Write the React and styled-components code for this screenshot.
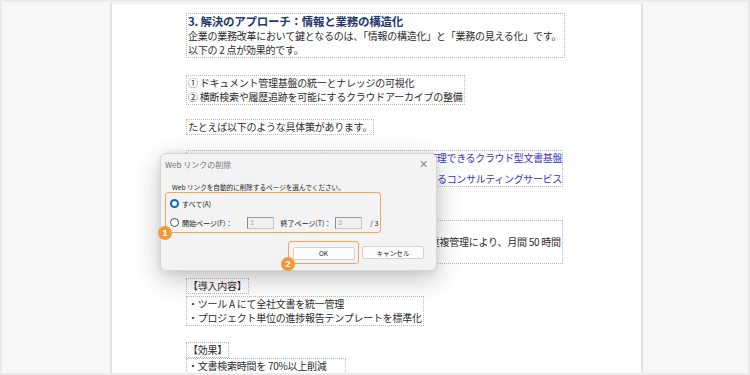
import React from 'react';
import styled, { createGlobalStyle } from 'styled-components';

const GlobalStyle = createGlobalStyle`
  html, body {
    margin: 0;
    padding: 0;
    background: #f7f7f7;
  }
  body {
    width: 750px;
    height: 375px;
    overflow: hidden;
    font-family: "Noto Sans CJK JP", "Noto Sans", sans-serif;
  }
`;

const Frame = styled.div`
  position: relative;
  width: 750px;
  height: 375px;
  box-sizing: border-box;
  border: 2px solid #ebebeb;
  background: #f7f7f7;
  padding: 1px 0 0 108px;
  display: flex;
  overflow: hidden;
`;

const Page = styled.div`
  width: 533px;
  box-sizing: border-box;
  background: #fff;
  border-left: 2px solid #e3e3e3;
  border-right: 2px solid #e3e3e3;
  border-top: 1px solid #eeeeee;
  padding: 9px 0 0 74px;
  display: flex;
  flex-direction: column;
  align-items: flex-start;
  overflow: hidden;
`;

const Box = styled.div`
  margin-top: ${p => p.mt || 0}px;
  width: ${p => (p.w ? `${p.w}px` : 'auto')};
  box-sizing: border-box;
  border: 1px dotted #b9b9b9;
  padding: 0 1px;
  font-size: 10px;
  line-height: 14px;
  letter-spacing: -0.25px;
  color: #2c2c2c;
  white-space: nowrap;
`;

const Heading = styled.div`
  font-size: 11.5px;
  line-height: 15px;
  font-weight: 700;
  color: #1f3a6e;
`;

const Line = styled.div`
  margin-bottom: ${p => p.mb || 0}px;
`;

const LinkLine = styled(Line)`
  color: #3737c8;
  letter-spacing: -0.35px;
`;

/* dialog */

const Dialog = styled.div`
  position: absolute;
  left: 158px;
  top: 151px;
  width: 277px;
  height: 118px;
  box-sizing: border-box;
  background: #f3f3f3;
  border: 1px solid #d6d6d6;
  border-radius: 6px;
  box-shadow: 0 8px 26px rgba(0, 0, 0, 0.24), 0 0 6px rgba(0, 0, 0, 0.08);
  display: flex;
  flex-direction: column;
  font-family: "Noto Sans CJK JP", "Noto Sans", sans-serif;
`;

const TitleBar = styled.div`
  height: 20px;
  display: flex;
  align-items: center;
  justify-content: space-between;
  padding: 0 8px 0 4px;
`;

const Title = styled.span`
  font-size: 8px;
  color: #747474;
`;

const Close = styled.span`
  font-size: 11px;
  color: #8a8a8a;
  font-family: "DejaVu Sans", sans-serif;
  font-weight: 300;
`;

const Instruction = styled.div`
  margin: 9px 0 0 11px;
  font-size: 6.6px;
  line-height: 9px;
  color: #1e1e1e;
`;

const Highlight = styled.div`
  position: relative;
  box-sizing: border-box;
  border: 1.5px solid #f4a660;
  border-radius: 3px;
`;

const Group = styled(Highlight)`
  margin-left: 4px;
  width: 216px;
  height: 41px;
  padding: 1px 0 0 4px;
  display: flex;
  flex-direction: column;
`;

const Row = styled.div`
  height: 19px;
  display: flex;
  align-items: center;
  font-size: 7px;
  color: #1e1e1e;
`;

const Radio = styled.span`
  width: 9px;
  height: 9px;
  box-sizing: border-box;
  border-radius: 50%;
  margin-right: 3px;
  flex-shrink: 0;
  background: #fff;
  border: ${p => (p.checked ? '2.6px solid #0a62c4' : '1px solid #4a4a4a')};
`;

const Label = styled.span`
  margin-right: ${p => p.mr || 0}px;
`;

const Field = styled.span`
  width: 27px;
  height: 12px;
  box-sizing: border-box;
  background: #f1f1f1;
  border: 1px solid #c8c8c8;
  border-left-color: #8c8c8c;
  border-top-color: #9a9a9a;
  margin-right: ${p => p.mr || 0}px;
  padding-left: 2px;
  font-size: 6.5px;
  line-height: 10px;
  color: #a8a8a8;
  font-family: "Liberation Sans", sans-serif;
`;

const Buttons = styled.div`
  margin-top: 8px;
  padding-right: 12px;
  display: flex;
  justify-content: flex-end;
  align-items: center;
  gap: 3px;
`;

const OkWrap = styled(Highlight)`
  padding: 4.5px 3.5px 3.5px;
`;

const Button = styled.div`
  width: 62px;
  height: 13px;
  box-sizing: border-box;
  background: #fdfdfd;
  border: 1px solid #d2d2d2;
  border-radius: 2px;
  display: flex;
  align-items: center;
  justify-content: center;
  font-size: 6.6px;
  color: #1e1e1e;
`;

const Badge = styled.span`
  position: absolute;
  left: -8px;
  bottom: -8px;
  width: 14px;
  height: 14px;
  border-radius: 50%;
  background: #f2993a;
  color: #fff;
  font-family: "Liberation Sans", Arial, sans-serif;
  font-weight: 700;
  font-size: 9px;
  line-height: 14px;
  text-align: center;
`;

export default function App() {
  return (
    <>
      <GlobalStyle />
      <Frame>
        <Page>
          <Box w={379}>
            <Heading>3. 解決のアプローチ：情報と業務の構造化</Heading>
            <Line>企業の業務改革において鍵となるのは、「情報の構造化」と「業務の見える化」です。</Line>
            <Line>以下の 2 点が効果的です。</Line>
          </Box>
          <Box mt={17}>
            <Line>① ドキュメント管理基盤の統一とナレッジの可視化</Line>
            <Line>② 横断検索や履歴追跡を可能にするクラウドアーカイブの整備</Line>
          </Box>
          <Box mt={14}>
            <Line>たとえば以下のような具体策があります。</Line>
          </Box>
          <Box mt={15} w={377}>
            <LinkLine mb={7}>・ツール A：社内の全部門で文書と更新履歴を一元的に管理できるクラウド型文書基盤</LinkLine>
            <LinkLine>・サービス B：業務フローや課題の見える化を継続支援するコンサルティングサービス</LinkLine>
          </Box>
          <Box mt={33} w={377}>
            <Line>【事例】</Line>
            <Line>A 社では、部門ごとに散在するフォルダや各ファイルの重複管理により、月間 50 時間</Line>
            <Line>以上を文書の検索と確認に費やしていました。</Line>
          </Box>
          <Box mt={14}>
            <Line>【導入内容】</Line>
          </Box>
          <Box mt={2}>
            <Line>・ツール A にて全社文書を統一管理</Line>
            <Line>・プロジェクト単位の進捗報告テンプレートを標準化</Line>
          </Box>
          <Box mt={16}>
            <Line>【効果】</Line>
          </Box>
          <Box>
            <Line>・文書検索時間を 70%以上削減</Line>
            <Line>・社内の問い合わせ対応工数を半減</Line>
          </Box>
        </Page>

        <Dialog>
          <TitleBar>
            <Title>Web リンクの削除</Title>
            <Close>✕</Close>
          </TitleBar>
          <Instruction>Web リンクを自動的に削除するページを選んでください。</Instruction>
          <Group>
            <Row>
              <Radio checked />
              <Label>すべて(A)</Label>
            </Row>
            <Row>
              <Radio />
              <Label mr={15}>開始ページ(F)：</Label>
              <Field mr={6}>1</Field>
              <Label mr={4}>終了ページ(T)：</Label>
              <Field mr={8}>3</Field>
              <Label>/ 3</Label>
            </Row>
            <Badge>1</Badge>
          </Group>
          <Buttons>
            <OkWrap>
              <Button>OK</Button>
              <Badge>2</Badge>
            </OkWrap>
            <Button>キャンセル</Button>
          </Buttons>
        </Dialog>
      </Frame>
    </>
  );
}
